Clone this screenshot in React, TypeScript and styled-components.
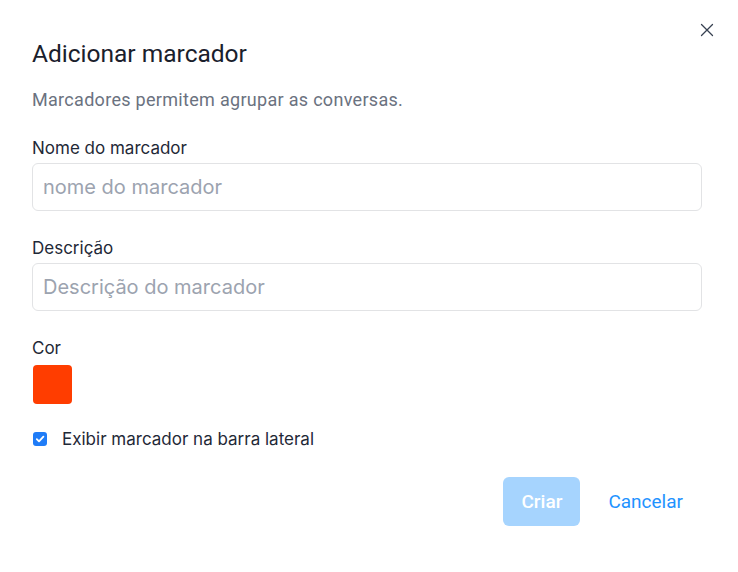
import { createGlobalStyle, styled } from 'styled-components';

const GlobalStyle = createGlobalStyle`
  html, body {
    margin: 0;
    padding: 0;
    background: #ffffff;
  }
  * {
    box-sizing: border-box;
  }
`;

const Modal = styled.div`
  position: relative;
  width: 738px;
  height: 572px;
  padding: 36px 36px 0 32px;
  background: #ffffff;
  font-family: Inter, 'Noto Sans', sans-serif;
`;

const CloseButton = styled.button`
  position: absolute;
  top: 20px;
  right: 21px;
  width: 20px;
  height: 20px;
  padding: 0;
  border: 0;
  background: transparent;
  display: flex;
  align-items: center;
  justify-content: center;
  cursor: pointer;
`;

const Title = styled.h2`
  margin: 0;
  font-family: Roboto, sans-serif;
  font-size: 24.5px;
  font-weight: 400;
  line-height: 36px;
  color: #1a202c;
`;

const Subtitle = styled.p`
  margin: 16px 0 0;
  font-family: Roboto, sans-serif;
  font-size: 18px;
  line-height: 24px;
  color: #6b7280;
  letter-spacing: 0.3px;
`;

const Field = styled.div<{ $top: number }>`
  display: flex;
  flex-direction: column;
  margin-top: ${({ $top }) => $top}px;
`;

const Label = styled.label`
  font-size: 17px;
  line-height: 24px;
  color: #1f2937;
  margin-bottom: 3px;
`;

const Input = styled.input`
  width: 670px;
  height: 48px;
  padding: 0 10px;
  border: 1px solid #e2e3e5;
  border-radius: 6px;
  font-family: Inter, sans-serif;
  font-size: 20px;
  color: #1f2937;
  outline: none;

  &::placeholder {
    color: #9ca3af;
  }
`;

const Swatch = styled.div<{ $color: string }>`
  width: 39px;
  height: 39px;
  margin: 2px 0 0 1px;
  border-radius: 4px;
  background: ${({ $color }) => $color};
`;

const CheckRow = styled.label`
  display: flex;
  align-items: center;
  gap: 15px;
  margin-top: 23px;
  font-size: 17px;
  line-height: 24px;
  color: #1f2937;
`;

const CheckBox = styled.span`
  width: 14px;
  height: 14px;
  margin-left: 1px;
  border-radius: 3px;
  background: #1f7cf7;
  display: flex;
  align-items: center;
  justify-content: center;
`;

const Footer = styled.div`
  display: flex;
  justify-content: flex-end;
  align-items: center;
  gap: 10px;
  margin-top: 26px;
  padding-right: 1px;
`;

const Button = styled.button<{ $variant: 'primary' | 'link' }>`
  height: 49px;
  padding: 0 18px;
  border: 0;
  border-radius: 6px;
  font-family: Roboto, sans-serif;
  font-size: 19px;
  font-weight: ${({ $variant }) => ($variant === 'primary' ? 500 : 400)};
  background: ${({ $variant }) => ($variant === 'primary' ? '#a6d4fe' : 'transparent')};
  color: ${({ $variant }) => ($variant === 'primary' ? '#ffffff' : '#1f93ff')};
  cursor: pointer;
`;

export default function App() {
  return (
    <>
      <GlobalStyle />
      <Modal>
        <CloseButton aria-label="Fechar">
          <svg width="14" height="14" viewBox="0 0 14 14">
            <path d="M1.5 1.5 L12.5 12.5 M12.5 1.5 L1.5 12.5" stroke="#374151" strokeWidth="1.3" strokeLinecap="round" />
          </svg>
        </CloseButton>
        <Title>Adicionar marcador</Title>
        <Subtitle>Marcadores permitem agrupar as conversas.</Subtitle>

        <Field $top={24}>
          <Label>Nome do marcador</Label>
          <Input placeholder="nome do marcador" />
        </Field>

        <Field $top={25}>
          <Label>Descrição</Label>
          <Input placeholder="Descrição do marcador" />
        </Field>

        <Field $top={25}>
          <Label>Cor</Label>
          <Swatch $color="#ff3d00" />
        </Field>

        <CheckRow>
          <CheckBox>
            <svg width="10" height="10" viewBox="0 0 10 10">
              <path d="M1.8 5.2 L4 7.4 L8.4 2.6" stroke="#ffffff" strokeWidth="1.8" fill="none" strokeLinecap="round" strokeLinejoin="round" />
            </svg>
          </CheckBox>
          Exibir marcador na barra lateral
        </CheckRow>

        <Footer>
          <Button $variant="primary">Criar</Button>
          <Button $variant="link">Cancelar</Button>
        </Footer>
      </Modal>
    </>
  );
}
